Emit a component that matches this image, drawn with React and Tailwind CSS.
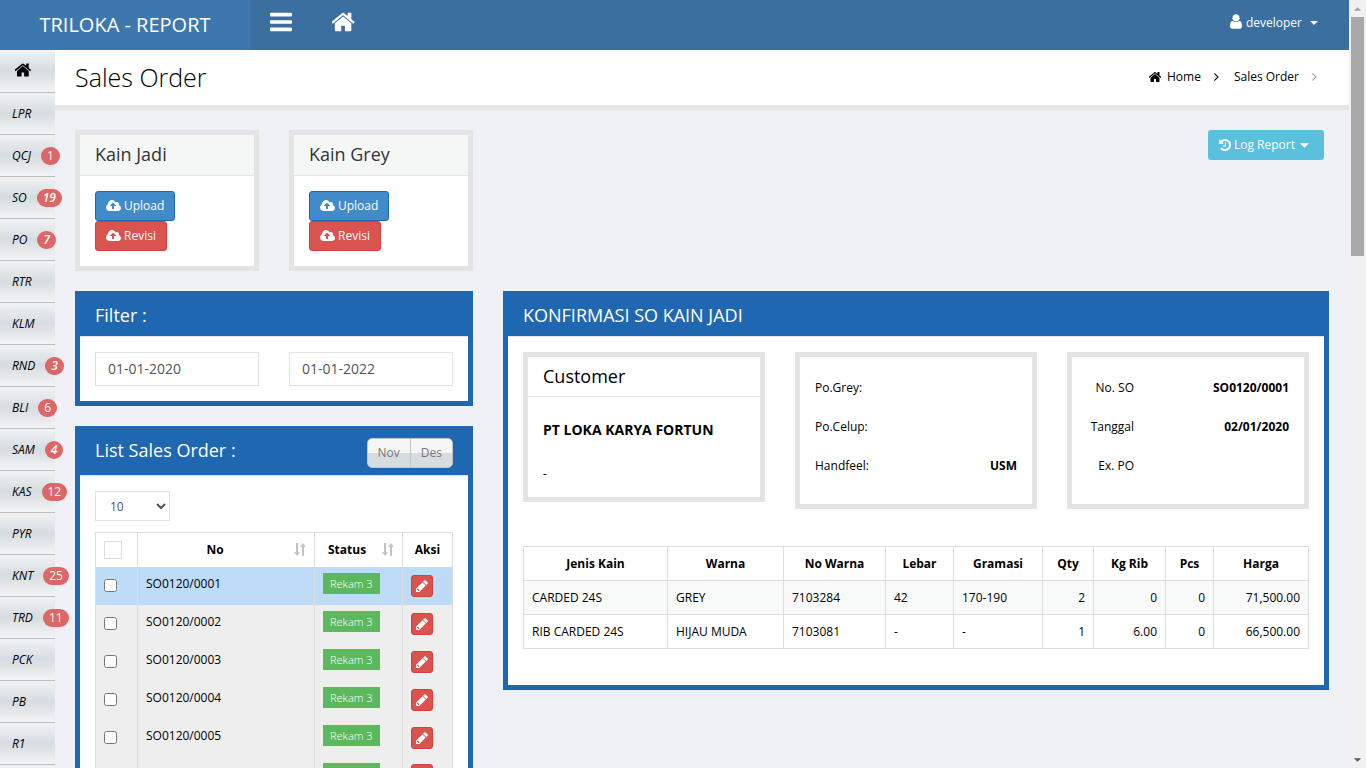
import { useState } from 'react';

const ICONS = {
  home: {
    box: '64 128 1664 1536',
    d: 'M1408 992v480q0 26-19 45t-45 19h-384v-384h-256v384h-384q-26 0-45-19t-19-45v-480q0-1 .5-3t.5-3l575-474 575 474q1 2 1 6zm223-69l-62 74q-8 9-21 11h-3q-13 0-21-7l-692-577-692 577q-12 8-24 7-13-2-21-11l-62-74q-8-10-7-23.5t11-21.5l719-599q32-26 76-26t76 26l244 204v-195q0-14 9-23t23-9h192q14 0 23 9t9 23v408l219 182q10 8 11 21.5t-7 23.5z',
  },
  bars: {
    box: '128 128 1536 1536',
    d: 'M1664 1344v128q0 26-19 45t-45 19h-1408q-26 0-45-19t-19-45v-128q0-26 19-45t45-19h1408q26 0 45 19t19 45zm0-512v128q0 26-19 45t-45 19h-1408q-26 0-45-19t-19-45v-128q0-26 19-45t45-19h1408q26 0 45 19t19 45zm0-512v128q0 26-19 45t-45 19h-1408q-26 0-45-19t-19-45v-128q0-26 19-45t45-19h1408q26 0 45 19t19 45z',
  },
  user: {
    box: '256 128 1280 1536',
    d: 'M1536 1399q0 109-62.5 187t-150.5 78h-854q-88 0-150.5-78t-62.5-187q0-85 8.5-160.5t31.5-152 58.5-131 94-89 134.5-34.5q131 128 313 128t313-128q76 0 134.5 34.5t94 89 58.5 131 31.5 152 8.5 160.5zm-256-887q0 159-112.5 271.5t-271.5 112.5-271.5-112.5-112.5-271.5 112.5-271.5 271.5-112.5 271.5 112.5 112.5 271.5z',
  },
  history: {
    box: '128 128 1536 1536',
    d: 'M1664 896q0 156-61 298t-164 245-245 164-298 61q-172 0-327-72.5t-264-204.5q-7-10-6.5-22.5t8.5-20.5l137-138q10-9 25-9 16 2 23 12 73 95 179 147t225 52q104 0 198.5-40.5t163.5-109.5 109.5-163.5 40.5-198.5-40.5-198.5-109.5-163.5-163.5-109.5-198.5-40.5q-98 0-188 35.5t-160 101.5l137 138q31 30 14 69-17 40-59 40h-448q-26 0-45-19t-19-45v-448q0-42 40-59 39-17 69 14l130 129q107-101 244.5-156.5t284.5-55.5q156 0 298 61t245 164 164 245 61 298zm-640-288v448q0 14-9 23t-23 9h-320q-14 0-23-9t-9-23v-64q0-14 9-23t23-9h224v-352q0-14 9-23t23-9h64q14 0 23 9t9 23z',
  },
  upload: {
    box: '-64 128 1920 1536',
    d: 'M1216 864q0-14-9-23l-352-352q-9-9-23-9t-23 9l-351 351q-10 12-10 24 0 14 9 23t23 9h224v352q0 13 9.5 22.5t22.5 9.5h192q13 0 22.5-9.5t9.5-22.5v-352h224q13 0 22.5-9.5t9.5-22.5zm640 288q0 159-112.5 271.5t-271.5 112.5h-1088q-185 0-316.5-131.5t-131.5-316.5q0-130 70-240t188-165q-2-30-2-43 0-212 150-362t362-150q156 0 281.5 87t182.5 231q71-62 166-62 106 0 181 75t75 181q0 76-41 138 130 31 213.5 135.5t83.5 238.5z',
  },
  pencil: {
    box: '128 128 1536 1536',
    d: 'M491 1536l91-91-235-235-91 91v107h128v128h107zM960 416l416 416-832 832h-416v-416zm683 96q0 53-37 90l-166 166-416-416 166-165q36-38 90-38 53 0 91 38l235 234q37 39 37 91z',
  },
  angle: {
    box: '576 448 640 1024',
    d: 'M1171 960q0 13-10 23l-466 466q-10 10-23 10t-23-10l-50-50q-10-10-10-23t10-23l393-393-393-393q-10-10-10-23t10-23l50-50q10-10 23-10t23 10l466 466q10 10 10 23z',
  },
  caret: { box: '0 0 10 5', d: 'M0 0h10l-5 5z' },
  caretUp: { box: '0 0 10 5', d: 'M0 5h10l-5-5z' },
  sort: { box: '0 0 12 13', d: 'M2 0h2v9h2l-3 4-3-4h2zM8 13h2V4h2L9 0 6 4h2z' },
};

const MENU = [
  { label: 'LPR' },
  { label: 'QCJ', count: 1 },
  { label: 'SO', count: 19, urgent: true },
  { label: 'PO', count: 7, urgent: true },
  { label: 'RTR' },
  { label: 'KLM' },
  { label: 'RND', count: 3, urgent: true },
  { label: 'BLI', count: 6 },
  { label: 'SAM', count: 4, urgent: true },
  { label: 'KAS', count: 12 },
  { label: 'PYR' },
  { label: 'KNT', count: 25 },
  { label: 'TRD', count: 11 },
  { label: 'PCK' },
  { label: 'PB' },
  { label: 'R1' },
];

const ORDERS = ['SO0120/0001', 'SO0120/0002', 'SO0120/0003', 'SO0120/0004', 'SO0120/0005', 'SO0120/0006'];

const COLUMNS = [
  { name: 'Jenis Kain', width: 'w-[144px]' },
  { name: 'Warna', width: 'w-[116px]' },
  { name: 'No Warna', width: 'w-[102px]' },
  { name: 'Lebar', width: 'w-[68px]' },
  { name: 'Gramasi', width: 'w-[89px]' },
  { name: 'Qty', width: 'w-[51px]' },
  { name: 'Kg Rib', width: 'w-[72px]' },
  { name: 'Pcs', width: 'w-[48px]' },
  { name: 'Harga', width: 'w-[95px]' },
];

const ITEMS = [
  ['CARDED 24S', 'GREY', '7103284', '42', '170-190', '2', '0', '0', '71,500.00'],
  ['RIB CARDED 24S', 'HIJAU MUDA', '7103081', '-', '-', '1', '6.00', '0', '66,500.00'],
];

function Icon({ name, className }) {
  const { box, d } = ICONS[name];
  return (
    <svg viewBox={box} className={`shrink-0 fill-current ${className}`} aria-hidden="true">
      <path d={d} />
    </svg>
  );
}

function Navbar() {
  return (
    <header className="flex h-[50px] shrink-0 bg-[#3b6fa0] text-white">
      <a href="#" className="flex w-[250px] items-center justify-center bg-[#3e77ad] text-xl">TRILOKA - REPORT</a>
      <button type="button" aria-label="Menu" className="ml-5 flex h-11 items-center">
        <Icon name="bars" className="size-[22px]" />
      </button>
      <a href="#" aria-label="Dashboard" className="ml-10 flex h-11 items-center">
        <Icon name="home" className="h-[22px] w-6" />
      </a>
      <button type="button" className="mr-[31px] ml-auto flex h-[46px] items-center text-xs">
        <Icon name="user" className="mr-1 mb-[3px] h-[15px] w-3" />
        developer
        <Icon name="caret" className="ml-2 h-1 w-2" />
      </button>
    </header>
  );
}

function Sidebar() {
  const item = 'flex items-center border-b border-[#bdbdbd] bg-linear-to-b from-[#f1f3f4] via-[#d6dce0] to-[#f4f4f5] pl-3';
  return (
    <nav className="relative z-10 w-[55px] shrink-0">
      <a href="#" aria-label="Home" className={`${item} h-[43px] pb-[3px]`}>
        <Icon name="home" className="ml-[3px] h-4 w-[17px]" />
      </a>
      {MENU.map((m) => (
        <a key={m.label} href="#" className={`${item} h-[42px] text-xs italic`}>
          {m.label}
          {m.count && (
            <span className={`ml-[10px] flex h-[18px] min-w-[18px] shrink-0 items-center justify-center rounded-full bg-[#dd6666] px-[6px] text-white ${m.urgent ? 'font-semibold' : 'not-italic'}`}>
              {m.count}
            </span>
          )}
        </a>
      ))}
    </nav>
  );
}

function PageTitle() {
  return (
    <div className="flex h-[60px] items-center justify-between border-b-5 border-[#e4e4e4] bg-white pr-8 pl-5">
      <h1 className="text-[25px] font-light">Sales Order</h1>
      <div className="flex items-center pb-[2px] text-xs">
        <Icon name="home" className="mr-[5px] h-3 w-[13px]" />
        <a href="#">Home</a>
        <Icon name="angle" className="mx-[13px] h-2 w-[5px]" />
        <a href="#" className="ml-[2px]">Sales Order</a>
        <Icon name="angle" className="ml-[13px] h-2 w-[5px] text-[#a0a080]" />
      </div>
    </div>
  );
}

function UploadCard({ title }) {
  return (
    <section className="border-5 border-[#e4e4e4] bg-white">
      <h2 className="border-b border-[#e4e4e4] bg-[#f5f7f6] px-[15px] pb-[2px] text-lg leading-[38px] text-[#333]">{title}</h2>
      <div className="flex flex-col items-start p-[15px] text-xs text-white">
        <button type="button" className="flex h-[30px] items-center gap-[3px] rounded-[3px] border border-[#1f67b1] bg-[#428bca] px-[10px]">
          <Icon name="upload" className="h-3 w-[15px]" />
          Upload
        </button>
        <button type="button" className="flex h-[30px] items-center gap-[3px] rounded-[3px] border border-[#d43f3a] bg-[#d9534f] px-[10px]">
          <Icon name="upload" className="h-3 w-[15px]" />
          Revisi
        </button>
      </div>
    </section>
  );
}

function Panel({ title, actions, children }) {
  return (
    <section className="border-5 border-[#1f67b1] bg-white">
      <div className="flex items-start justify-between border-b border-[#e4e4e4] bg-[#1f67b1] px-[15px]">
        <h2 className="pb-[2px] text-lg leading-[38px] text-white">{title}</h2>
        {actions}
      </div>
      <div className="p-[15px]">{children}</div>
    </section>
  );
}

function OrderTable() {
  const cell = 'border-x border-[#ddd] px-2';
  return (
    <table className="mt-[11px] w-full table-fixed border-collapse border border-[#ddd] text-xs">
      <thead>
        <tr className="h-[34px]">
          <th className={`${cell} w-[42px]`}>
            <input type="checkbox" aria-label="Select all" className="block size-[18px] appearance-none border border-[#ddd] bg-white" />
          </th>
          <th className={cell}>
            <span className="flex items-center">
              <span className="flex-1 pr-[10px]">No</span>
              <Icon name="sort" className="h-[13px] w-3 text-[#c4c4c4]" />
            </span>
          </th>
          <th className={`${cell} w-[88px]`}>
            <span className="flex items-center">
              <span className="flex-1 pl-[5px] text-left">Status</span>
              <Icon name="sort" className="h-[13px] w-3 text-[#c4c4c4]" />
            </span>
          </th>
          <th className={`${cell} w-[50px]`}>Aksi</th>
        </tr>
      </thead>
      <tbody>
        {ORDERS.map((no, i) => (
          <tr key={no} className={i === 0 ? 'h-[38px] bg-[#bedcf7]' : 'h-[38px] bg-[#eee]'}>
            <td className={cell}>
              <input type="checkbox" aria-label={no} className="block size-[13px]" />
            </td>
            <td className={`${cell} pb-1`}>{no}</td>
            <td className={`${cell} pb-1`}>
              <span className="inline-block bg-[#5cb85c] px-[7px] text-[11px] leading-[21px] font-light text-white">Rekam 3</span>
            </td>
            <td className={cell}>
              <button type="button" aria-label={`Edit ${no}`} className="flex size-[22px] items-center justify-center rounded-[3px] border border-[#d43f3a] bg-[#d9534f] text-white">
                <Icon name="pencil" className="size-3" />
              </button>
            </td>
          </tr>
        ))}
      </tbody>
    </table>
  );
}

function ItemTable() {
  return (
    <table className="w-full table-fixed border-collapse border border-[#ddd] text-xs">
      <thead>
        <tr className="h-[34px]">
          {COLUMNS.map((c) => (
            <th key={c.name} className={`border border-[#ddd] ${c.width}`}>{c.name}</th>
          ))}
        </tr>
      </thead>
      <tbody>
        {ITEMS.map((row) => (
          <tr key={row[0]} className="h-[34px] odd:bg-[#f8faf9]">
            {row.map((value, i) => (
              <td key={COLUMNS[i].name} className={`border border-[#ddd] px-2 ${i > 4 ? 'text-right' : ''}`}>{value}</td>
            ))}
          </tr>
        ))}
      </tbody>
    </table>
  );
}

function Details({ rows, alignRight }) {
  return (
    <dl className="flex flex-col gap-[21px] border-5 border-[#e4e4e4] px-[15px] pt-[22px] pb-[29px] text-xs leading-[18px]">
      {rows.map(([label, value]) => (
        <div key={label} className="flex justify-between">
          <dt className={alignRight ? 'w-[47px] text-right' : ''}>{label}</dt>
          <dd className="font-bold">{value}</dd>
        </div>
      ))}
    </dl>
  );
}

function Scrollbar() {
  return (
    <div className="flex w-[17px] shrink-0 flex-col items-center bg-[#f1f1f1]" aria-hidden="true">
      <div className="flex h-[17px] items-center">
        <Icon name="caretUp" className="h-1 w-[7px] text-[#a3a3a3]" />
      </div>
      <div className="h-[239px] w-[13px] bg-[#a8a8a8]" />
      <div className="mt-auto flex h-[17px] items-center">
        <Icon name="caret" className="h-1 w-[7px] text-[#505050]" />
      </div>
    </div>
  );
}

export default function App() {
  const [from, setFrom] = useState('01-01-2020');
  const [to, setTo] = useState('01-01-2022');
  const dateInput = 'h-[34px] w-full min-w-0 border border-[#e2e2e4] bg-white px-3 pb-[2px] text-sm text-[#555]';
  const monthButton = 'h-[30px] border border-[#c3c6c9] bg-linear-to-b from-[#f5f7f6] from-50% to-[#d6dce0] to-50% px-[10px]';

  return (
    <div className="flex h-screen overflow-hidden font-['Open_Sans',sans-serif] text-black">
      <div className="flex min-w-0 flex-1 flex-col bg-[#f0f1f6]">
        <Navbar />
        <div className="flex min-h-0 flex-1">
          <Sidebar />
          <main className="min-w-0 flex-1">
            <PageTitle />
            <div className="flex px-[5px] pt-5">
              <div className="flex w-1/3 flex-col gap-5 px-[15px]">
                <div className="grid grid-cols-2 gap-[30px]">
                  <UploadCard title="Kain Jadi" />
                  <UploadCard title="Kain Grey" />
                </div>

                <Panel title="Filter :">
                  <div className="grid grid-cols-2 gap-[30px]">
                    <input type="text" aria-label="From" className={dateInput} value={from} onChange={(e) => setFrom(e.target.value)} />
                    <input type="text" aria-label="To" className={dateInput} value={to} onChange={(e) => setTo(e.target.value)} />
                  </div>
                </Panel>

                <Panel
                  title="List Sales Order :"
                  actions={
                    <div className="my-[7px] flex text-xs text-[#777]">
                      <button type="button" className={`${monthButton} rounded-l-[5px]`}>Nov</button>
                      <button type="button" className={`${monthButton} -ml-px rounded-r-[5px]`}>Des</button>
                    </div>
                  }
                >
                  <select aria-label="Rows per page" className="block h-[30px] w-[75px] border border-[#e2e2e4] bg-white pl-[10px] text-xs text-[#555]">
                    <option>10</option>
                    <option>25</option>
                    <option>50</option>
                  </select>
                  <OrderTable />
                </Panel>
              </div>

              <div className="w-2/3 px-[15px]">
                <div className="flex h-[161px] items-start justify-end pr-[5px]">
                  <button type="button" className="flex h-[30px] items-center rounded-[3px] bg-[#5bc0de] pr-[15px] pl-[11px] text-xs text-white">
                    <Icon name="history" className="mr-[3px] size-3" />
                    Log Report
                    <Icon name="caret" className="ml-[5px] h-[5px] w-[9px]" />
                  </button>
                </div>

                <Panel title="KONFIRMASI SO KAIN JADI">
                  <div className="grid grid-cols-3 items-start gap-[30px]">
                    <section className="border-5 border-[#e4e4e4]">
                      <h3 className="border-b border-[#e4e4e4] px-[15px] text-lg leading-[39px]">Customer</h3>
                      <div className="px-[15px] pt-[23px] pb-[15px]">
                        <p className="text-sm leading-5 font-bold">PT LOKA KARYA FORTUN</p>
                        <p className="mt-[25px] text-xs leading-[17px]">-</p>
                      </div>
                    </section>
                    <Details rows={[['Po.Grey:', ''], ['Po.Celup:', ''], ['Handfeel:', 'USM']]} />
                    <Details alignRight rows={[['No. SO', 'SO0120/0001'], ['Tanggal', '02/01/2020'], ['Ex. PO', '']]} />
                  </div>
                  <div className="mt-[37px] mb-[21px]">
                    <ItemTable />
                  </div>
                </Panel>
              </div>
            </div>
          </main>
        </div>
      </div>
      <Scrollbar />
    </div>
  );
}
